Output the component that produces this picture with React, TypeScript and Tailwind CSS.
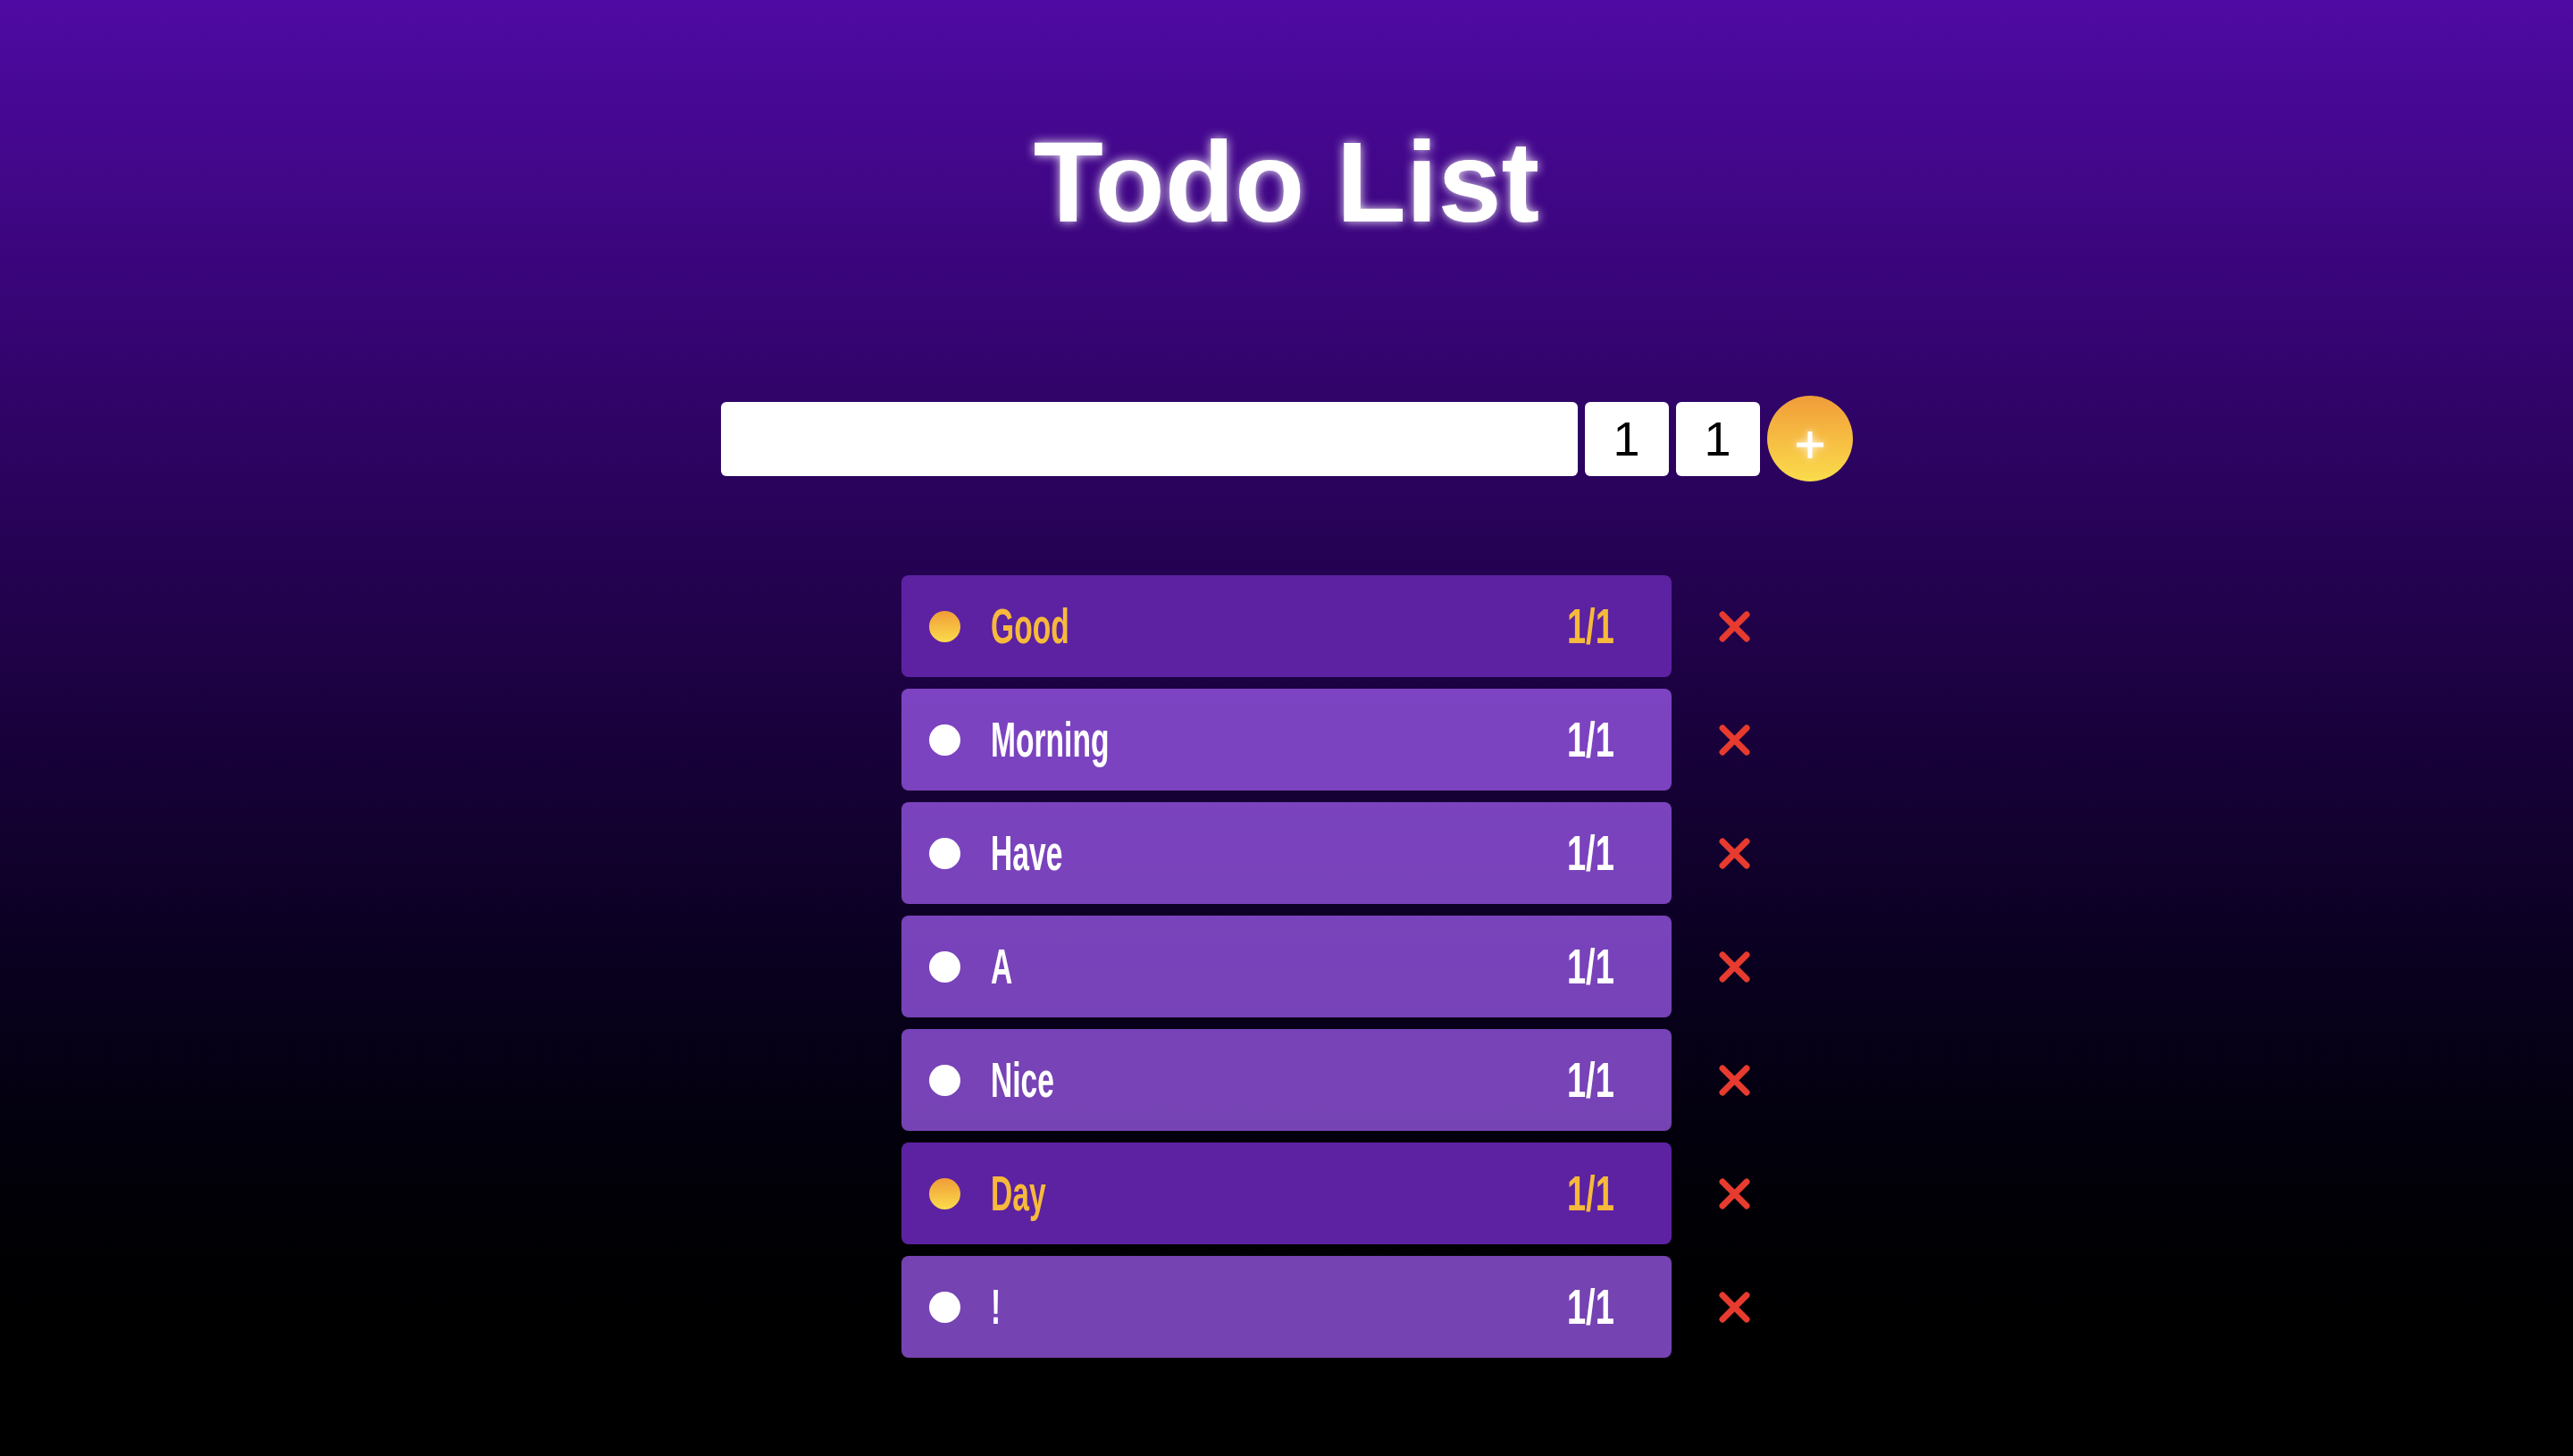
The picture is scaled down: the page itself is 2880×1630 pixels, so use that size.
import React from 'react';

type Todo = { text: string; done: boolean; count: string };

const todos: Todo[] = [
  { text: 'Good', done: true, count: '1/1' },
  { text: 'Morning', done: false, count: '1/1' },
  { text: 'Have', done: false, count: '1/1' },
  { text: 'A', done: false, count: '1/1' },
  { text: 'Nice', done: false, count: '1/1' },
  { text: 'Day', done: true, count: '1/1' },
  { text: '!', done: false, count: '1/1' },
];

function CloseIcon() {
  return (
    <svg width="35" height="35" viewBox="0 0 35 35" fill="none">
      <path d="M4 4L31 31M31 4L4 31" stroke="#e63b2e" strokeWidth="7" strokeLinecap="round" />
    </svg>
  );
}

function TodoRow({ todo }: { todo: Todo }) {
  return (
    <li className="flex items-center w-[1038px]">
      <div className="w-[88px] shrink-0" />
      <div
        className={
          todo.done
            ? 'flex items-center w-[862px] h-[114px] rounded-lg pl-[31px] pr-[64px] bg-[#5c22a2] text-[#f6b93b]'
            : 'flex items-center w-[862px] h-[114px] rounded-lg pl-[31px] pr-[64px] bg-[#9d5aed]/75 text-white'
        }
      >
        <span
          className={
            todo.done
              ? 'w-[35px] h-[35px] rounded-full shrink-0 bg-linear-to-b from-[#f09c38] to-[#fadc4c]'
              : 'w-[35px] h-[35px] rounded-full shrink-0 bg-white'
          }
        />
        <span className="ml-[34px] flex-1 min-w-0">
          <span className="inline-block origin-left scale-x-[0.6] text-[56px] leading-none font-bold">
            {todo.text}
          </span>
        </span>
        <span className="inline-block origin-right scale-x-[0.68] text-[56px] leading-none font-bold">
          {todo.count}
        </span>
      </div>
      <button className="pl-[53px] w-[88px] shrink-0 flex items-center">
        <CloseIcon />
      </button>
    </li>
  );
}

export default function App() {
  return (
    <div className="min-h-screen bg-linear-to-b from-[#4f0aa3] to-black flex flex-col items-center pt-[140px] font-['Liberation_Sans',Arial,sans-serif]">
      <h1 className="text-[128px] leading-none font-bold text-white [text-shadow:0_0_12px_rgba(255,255,255,0.9)]">
        Todo List
      </h1>

      <form className="mt-[175px] flex items-center gap-2" onSubmit={(e) => e.preventDefault()}>
        <input type="text" className="w-[959px] h-[83px] rounded-md bg-white px-4 text-[40px] outline-none" />
        <input
          type="text"
          defaultValue="1"
          className="w-[94px] h-[83px] rounded-md bg-white text-center text-[54px] text-black outline-none"
        />
        <input
          type="text"
          defaultValue="1"
          className="w-[94px] h-[83px] rounded-md bg-white text-center text-[54px] text-black outline-none"
        />
        <button className="w-[96px] h-[96px] rounded-full bg-linear-to-b from-[#f09c38] to-[#fadc4c] flex items-center justify-center">
          <svg width="34" height="44" viewBox="0 0 34 44" className="[filter:drop-shadow(0_0_4px_rgba(255,255,255,0.9))]">
            <path d="M17 14V44M2 29H32" stroke="white" strokeWidth="5" />
          </svg>
        </button>
      </form>

      <ul className="mt-[105px] flex flex-col gap-[13px]">
        {todos.map((t, i) => (
          <TodoRow key={i} todo={t} />
        ))}
      </ul>
    </div>
  );
}
